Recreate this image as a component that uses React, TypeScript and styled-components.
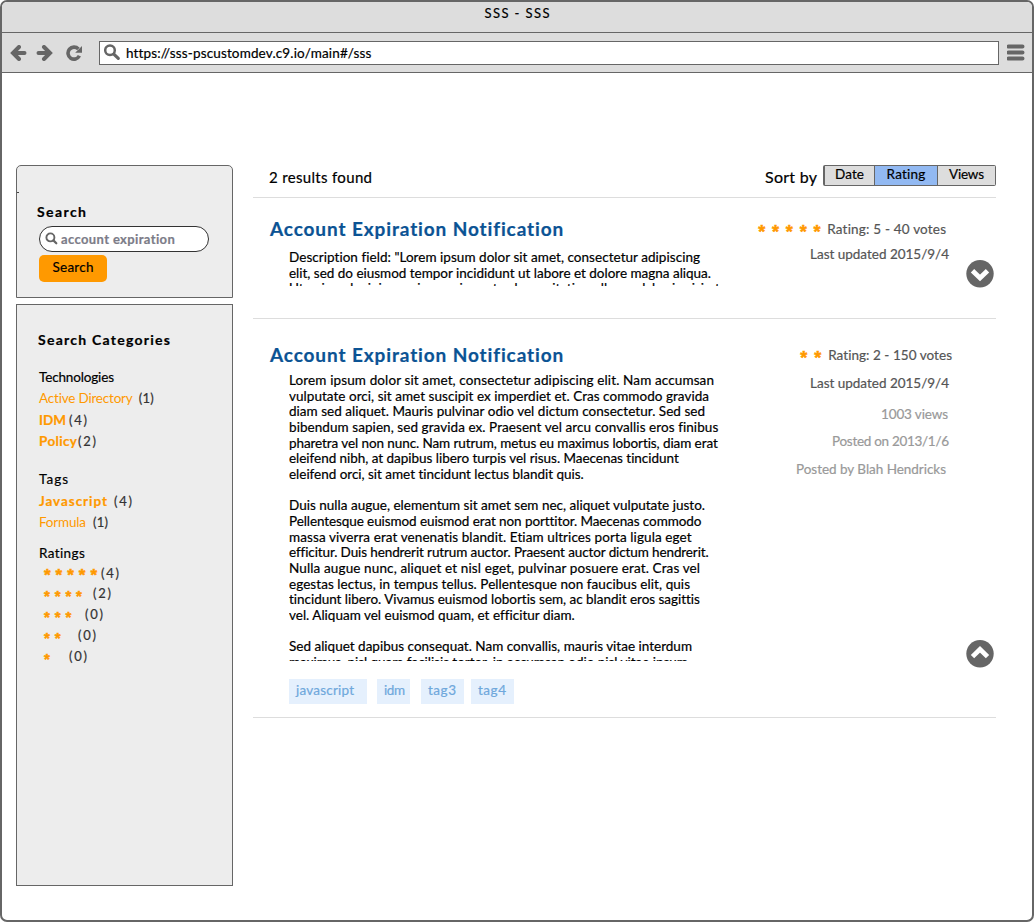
import React, { useLayoutEffect, useRef, useState } from "react";
import styled, { createGlobalStyle } from "styled-components";

const GlobalStyle = createGlobalStyle`
  * { box-sizing: border-box; }
  body {
    margin: 0;
    background: #fff;
    color: #000;
    font-family: Lato, "Liberation Sans", sans-serif;
    font-size: 13.5px;
    overflow: hidden;
  }
`;

/* ---------- text set to a fixed measure ---------- */

const Measured = styled.span<{ $size?: number; $color?: string; $bold?: boolean; $weight?: number }>`
  display: inline-block;
  flex: none;
  white-space: pre;
  font-size: ${(p) => p.$size ?? 13.5}px;
  font-weight: ${(p) => (p.$bold ? 700 : 400)};
  color: ${(p) => p.$color ?? "#000"};
  -webkit-text-stroke: ${(p) => p.$weight ?? 0.2}px currentColor;
`;

type LabelProps = {
  children: string;
  width: number;
  size?: number;
  color?: string;
  bold?: boolean;
  stroke?: number;
};

function Label({ children, width, size, color, bold, stroke }: LabelProps) {
  const ref = useRef<HTMLSpanElement>(null);
  const [tracking, setTracking] = useState(0);
  useLayoutEffect(() => {
    const el = ref.current;
    if (!el) return;
    el.style.letterSpacing = "0px";
    const natural = el.getBoundingClientRect().width;
    const next = (width - natural) / Math.max(1, children.length - 1);
    el.style.letterSpacing = `${next}px`;
    setTracking(next);
  }, [children, width, size, bold]);
  return (
    <Measured
      ref={ref}
      $size={size}
      $color={color}
      $bold={bold}
      $weight={stroke}
      style={{ letterSpacing: tracking, marginRight: -tracking }}
    >
      {children}
    </Measured>
  );
}

/* ---------- browser window ---------- */

const Window = styled.div`
  width: 1034px;
  height: 922px;
  border: 2px solid #666;
  border-radius: 7px;
  overflow: hidden;
  background: #fff;
`;

const TitleBar = styled.header`
  height: 31px;
  padding-top: 3px;
  border-bottom: 1px solid #666;
  background: #ddd;
  display: flex;
  justify-content: center;
  line-height: 17px;
`;

const Toolbar = styled.nav`
  height: 40px;
  border-bottom: 1px solid #666;
  background: #ddd;
  display: flex;
  align-items: center;
  padding: 0 6px 0 8px;
`;

const NavIcon = styled.svg<{ $after: number }>`
  display: block;
  flex: none;
  margin-right: ${(p) => p.$after}px;
`;

const AddressBar = styled.div`
  width: 900px;
  height: 24px;
  border: 1px solid #666;
  background: #fff;
  display: flex;
  align-items: center;
  padding-left: 4px;
  gap: 5px;
  margin-right: 8px;
`;

const Content = styled.main`
  display: flex;
  gap: 20px;
  padding: 92px 0 0 14px;
`;

/* ---------- sidebar ---------- */

const Sidebar = styled.aside`
  width: 217px;
  display: flex;
  flex-direction: column;
  gap: 6px;
`;

const Panel = styled.section<{ $height: number; $rounded?: boolean }>`
  position: relative;
  height: ${(p) => p.$height}px;
  border: 1px solid #666;
  border-radius: ${(p) => (p.$rounded ? "5px 5px 0 0" : "0")};
  background: #ededed;
  padding-left: 22px;
`;

const Tick = styled.i`
  position: absolute;
  left: 0;
  top: 26px;
  width: 2px;
  height: 1px;
  background: #444;
`;

const Heading = styled.h2<{ $top: number; $shift?: number }>`
  margin: ${(p) => p.$top}px 0 0 ${(p) => p.$shift ?? 0}px;
  height: 20px;
  line-height: 20px;
  font-size: 15px;
`;

const SearchField = styled.div`
  width: 170px;
  height: 26px;
  margin-top: 5px;
  border: 1px solid #333;
  border-radius: 13px;
  background: #fff;
  display: flex;
  align-items: center;
  padding: 0 0 1px 5px;
  gap: 3px;
`;

const SearchButton = styled.button`
  display: flex;
  justify-content: center;
  align-items: center;
  width: 68px;
  height: 27px;
  margin-top: 3px;
  padding: 0 0 3px;
  border: 0;
  border-radius: 5px;
  background: #ff9900;
  font-family: inherit;
`;

const Row = styled.div<{ $top: number; $gap?: number }>`
  display: flex;
  align-items: center;
  gap: ${(p) => p.$gap ?? 0}px;
  height: 18px;
  margin-top: ${(p) => p.$top}px;
`;

const StarRow = styled.span<{ $pitch: number; $width?: number; $size?: number; $indent?: number }>`
  display: inline-grid;
  flex: none;
  grid-auto-flow: column;
  grid-auto-columns: ${(p) => p.$pitch}px;
  width: ${(p) => (p.$width ? `${p.$width}px` : "auto")};
  color: #ff9900;
  font: 700 ${(p) => p.$size ?? 18}px "Liberation Sans", sans-serif;
  -webkit-text-stroke: 0.5px currentColor;
  height: 18px;
  line-height: 18px;
  padding-top: 3px;
  padding-left: ${(p) => p.$indent ?? 0}px;
`;

/* ---------- results ---------- */

const Results = styled.section`
  width: 743px;
`;

const ResultsHeader = styled.div`
  display: flex;
  height: 33px;
  padding-left: 16px;
  border-bottom: 1px solid #ddd;
`;

const HeaderText = styled.div`
  padding-top: 3px;
  line-height: 18px;
`;

const Sort = styled.div`
  display: flex;
  gap: 6px;
  margin-left: auto;
`;

const Segments = styled.div`
  display: flex;
  height: 21px;
  border: 1px solid #666;
  border-left-width: 2px;
  border-radius: 2px;
`;

const Segment = styled.div<{ $width: number; $active?: boolean }>`
  width: ${(p) => p.$width}px;
  background: ${(p) => (p.$active ? "#92b9f2" : "#ddd")};
  display: flex;
  justify-content: center;
  line-height: 17px;
  & + & { border-left: 1px solid #666; }
`;

const Result = styled.article<{ $height: number }>`
  display: flex;
  height: ${(p) => p.$height}px;
  border-bottom: 1px solid #ddd;
  padding-left: 17px;
`;

const Copy = styled.div`
  width: 460px;
`;

const ResultTitle = styled.h1<{ $top: number }>`
  display: flex;
  align-items: center;
  margin: ${(p) => p.$top}px 0 0;
  height: 24px;
  line-height: 24px;
`;

const Body = styled.div<{ $height: number; $top: number }>`
  margin: ${(p) => p.$top}px 0 0 19px;
  height: ${(p) => p.$height}px;
  overflow: hidden;
`;

const Line = styled.div`
  height: 15.66px;
  line-height: 15.66px;
`;

const Tags = styled.div`
  display: flex;
  margin: 18px 0 0 19px;
`;

const Tag = styled.span<{ $width: number; $after: number }>`
  width: ${(p) => p.$width}px;
  height: 25px;
  margin-right: ${(p) => p.$after}px;
  padding-left: 7px;
  background: #e5f0fd;
  line-height: 23px;
`;

const Meta = styled.div`
  width: 222px;
  display: flex;
  flex-direction: column;
`;

const MetaRow = styled.div<{ $top: number; $inset: number }>`
  display: flex;
  justify-content: flex-end;
  align-items: center;
  height: 18px;
  margin-top: ${(p) => p.$top}px;
  padding-right: ${(p) => p.$inset}px;
`;

const Toggle = styled.button<{ $top: number }>`
  width: 28px;
  height: 28px;
  margin: ${(p) => p.$top}px 0 0 14px;
  padding: 0;
  border: 0;
  background: none;
  svg { display: block; }
`;

type StarsProps = { count: number; pitch: number; width?: number; size?: number; indent?: number };

function Stars({ count, pitch, width, size, indent }: StarsProps) {
  return (
    <StarRow $pitch={pitch} $width={width} $size={size} $indent={indent}>
      {Array.from({ length: count }, (_, i) => (
        <span key={i}>*</span>
      ))}
    </StarRow>
  );
}

function Chevron({ up }: { up?: boolean }) {
  return (
    <svg width="28" height="28" viewBox="0 0 28 28">
      <circle cx="14" cy="13.7" r="13.7" fill="#666" />
      <path
        d={up ? "M6.5 16.6 14 9.3l7.5 7.3" : "M6.5 10.7 14 18l7.5-7.3"}
        fill="none"
        stroke="#fff"
        strokeWidth="4.8"
      />
    </svg>
  );
}

type TextLine = [string, number];

const summary: TextLine[] = [
  ['Description field: "Lorem ipsum dolor sit amet, consectetur adipiscing', 411],
  ["elit, sed do eiusmod tempor incididunt ut labore et dolore magna aliqua.", 422],
  ["Ut enim ad minim veniam, quis nostrud exercitation ullamco laboris nisi ut", 431],
];

const fullText: TextLine[] = [
  ["Lorem ipsum dolor sit amet, consectetur adipiscing elit. Nam accumsan", 425],
  ["vulputate orci, sit amet suscipit ex imperdiet et. Cras commodo gravida", 420],
  ["diam sed aliquet. Mauris pulvinar odio vel dictum consectetur. Sed sed", 416],
  ["bibendum sapien, sed gravida ex. Praesent vel arcu convallis eros finibus", 429],
  ["pharetra vel non nunc. Nam rutrum, metus eu maximus lobortis, diam erat", 429],
  ["eleifend nibh, at dapibus libero turpis vel risus. Maecenas tincidunt", 390],
  ["eleifend orci, sit amet tincidunt lectus blandit quis.", 295],
  ["", 0],
  ["Duis nulla augue, elementum sit amet sem nec, aliquet vulputate justo.", 416],
  ["Pellentesque euismod euismod erat non porttitor. Maecenas commodo", 412],
  ["massa viverra erat venenatis blandit. Etiam ultrices porta ligula eget", 403],
  ["efficitur. Duis hendrerit rutrum auctor. Praesent auctor dictum hendrerit.", 419],
  ["Nulla augue nunc, aliquet et nisl eget, pulvinar posuere erat. Cras vel", 411],
  ["egestas lectus, in tempus tellus. Pellentesque non faucibus elit, quis", 401],
  ["tincidunt libero. Vivamus euismod lobortis sem, ac blandit eros sagittis", 411],
  ["vel. Aliquam vel euismod quam, et efficitur diam.", 285],
  ["", 0],
  ["Sed aliquet dapibus consequat. Nam convallis, mauris vitae interdum", 403],
  ["maximus, nisl quam facilisis tortor, in accumsan odio nisl vitae ipsum.", 402],
];

function Paragraphs({ lines }: { lines: TextLine[] }) {
  return (
    <>
      {lines.map(([text, width], i) => (
        <Line key={i}>{text && <Label width={width}>{text}</Label>}</Line>
      ))}
    </>
  );
}

const GREY = "#555";
const LIGHT = "#999";
const COUNT = "#333";
const ORANGE = "#ff9900";

export default function App() {
  return (
    <>
      <GlobalStyle />
      <Window>
        <TitleBar>
          <Label width={65} size={13}>SSS - SSS</Label>
        </TitleBar>
        <Toolbar>
          <NavIcon $after={9} width="17" height="16" viewBox="0 0 17 16">
            <path d="M9 2 3 8l6 6M3.5 8H14.5" fill="none" stroke="#666" strokeWidth="4" strokeLinecap="round" />
          </NavIcon>
          <NavIcon $after={12} width="17" height="16" viewBox="0 0 17 16">
            <path d="M8 2l6 6-6 6M13.5 8H2.5" fill="none" stroke="#666" strokeWidth="4" strokeLinecap="round" />
          </NavIcon>
          <NavIcon $after={17} width="17" height="16" viewBox="0 0 17 16">
            <path d="M13.4 4A6 6 0 1 0 14.4 10.8" fill="none" stroke="#666" strokeWidth="3.6" />
            <path d="M17 1V7.8H10.2Z" fill="#666" />
          </NavIcon>
          <AddressBar>
            <svg width="17" height="17" viewBox="0 0 17 17">
              <circle cx="6" cy="6.3" r="4.8" fill="none" stroke="#666" strokeWidth="2.5" />
              <path d="M9.8 10.1 14.3 14.4" stroke="#666" strokeWidth="3.2" strokeLinecap="round" />
            </svg>
            <Label width={245}>https://sss-pscustomdev.c9.io/main#/sss</Label>
          </AddressBar>
          <svg width="18" height="17" viewBox="0 0 18 17">
            <path d="M1.5 2.5H15.5M1.5 8.5H15.5M1.5 14.5H15.5" stroke="#666" strokeWidth="4" strokeLinecap="round" />
          </svg>
        </Toolbar>

        <Content>
          <Sidebar>
            <Panel $height={133} $rounded>
              <Tick />
              <Heading $top={35} $shift={-2}>
                <Label width={49} size={14} bold>Search</Label>
              </Heading>
              <SearchField>
                <svg width="13" height="13" viewBox="0 0 13 13">
                  <circle cx="5.4" cy="5.4" r="4" fill="none" stroke="#666" strokeWidth="1.9" />
                  <path d="M8.4 8.4 11.3 11.3" stroke="#666" strokeWidth="2.2" strokeLinecap="round" />
                </svg>
                <Label width={114} size={13} bold color="#7c7c88">account expiration</Label>
              </SearchField>
              <SearchButton>
                <Label width={41}>Search</Label>
              </SearchButton>
            </Panel>

            <Panel $height={582}>
              <Heading $top={24} $shift={-1}>
                <Label width={132} size={14} bold>Search Categories</Label>
              </Heading>
              <Row $top={19}><Label width={75}>Technologies</Label></Row>
              <Row $top={3} $gap={6}>
                <Label width={94} color={ORANGE} stroke={0}>Active Directory</Label>
                <Label width={15} size={13} color={COUNT}>(1)</Label>
              </Row>
              <Row $top={4} $gap={3}>
                <Label width={27} color={ORANGE} bold>IDM</Label>
                <Label width={18} size={13} color={COUNT}>(4)</Label>
              </Row>
              <Row $top={3} $gap={1}>
                <Label width={38} color={ORANGE} bold>Policy</Label>
                <Label width={18} size={13} color={COUNT}>(2)</Label>
              </Row>
              <Row $top={20}><Label width={29}>Tags</Label></Row>
              <Row $top={4} $gap={7}>
                <Label width={68} color={ORANGE} bold>Javascript</Label>
                <Label width={18} size={13} color={COUNT}>(4)</Label>
              </Row>
              <Row $top={3} $gap={7}>
                <Label width={47} color={ORANGE} stroke={0}>Formula</Label>
                <Label width={15} size={13} color={COUNT}>(1)</Label>
              </Row>
              <Row $top={13}><Label width={46}>Ratings</Label></Row>
              <Row $top={2}><Stars count={5} pitch={11.6} width={62} size={17} indent={5} /><Label width={18} size={13} color={COUNT}>(4)</Label></Row>
              <Row $top={2}><Stars count={4} pitch={10.7} width={54} size={15} indent={5} /><Label width={18} size={13} color={COUNT}>(2)</Label></Row>
              <Row $top={3}><Stars count={3} pitch={10.7} width={46} size={15} indent={5} /><Label width={18} size={13} color={COUNT}>(0)</Label></Row>
              <Row $top={3}><Stars count={2} pitch={10.7} width={39} size={15} indent={5} /><Label width={18} size={13} color={COUNT}>(0)</Label></Row>
              <Row $top={3}><Stars count={1} pitch={10.7} width={30} size={15} indent={5} /><Label width={18} size={13} color={COUNT}>(0)</Label></Row>
            </Panel>
          </Sidebar>

          <Results>
            <ResultsHeader>
              <HeaderText><Label width={103} size={15}>2 results found</Label></HeaderText>
              <Sort>
                <HeaderText><Label width={52} size={16}>Sort by</Label></HeaderText>
                <Segments>
                  <Segment $width={49}><Label width={29}>Date</Label></Segment>
                  <Segment $width={63} $active><Label width={39}>Rating</Label></Segment>
                  <Segment $width={58}><Label width={35}>Views</Label></Segment>
                </Segments>
              </Sort>
            </ResultsHeader>

            <Result $height={121}>
              <Copy>
                <ResultTitle $top={19}>
                  <Label width={294} size={19} bold color="#0b5394">Account Expiration Notification</Label>
                </ResultTitle>
                <Body $height={36} $top={9}><Paragraphs lines={summary} /></Body>
              </Copy>
              <Meta>
                <MetaRow $top={22} $inset={6}>
                  <Stars count={5} pitch={13.8} />
                  <Label width={119} color={GREY}>Rating: 5 - 40 votes</Label>
                </MetaRow>
                <MetaRow $top={7} $inset={3}><Label width={139} color={GREY}>Last updated 2015/9/4</Label></MetaRow>
              </Meta>
              <Toggle $top={62}><Chevron /></Toggle>
            </Result>

            <Result $height={399}>
              <Copy>
                <ResultTitle $top={24}>
                  <Label width={294} size={19} bold color="#0b5394">Account Expiration Notification</Label>
                </ResultTitle>
                <Body $height={288} $top={6}><Paragraphs lines={fullText} /></Body>
                <Tags>
                  <Tag $width={78} $after={10}><Label width={58} color="#6fa8dc">javascript</Label></Tag>
                  <Tag $width={33} $after={11}><Label width={21} color="#6fa8dc">idm</Label></Tag>
                  <Tag $width={43} $after={7}><Label width={28} color="#6fa8dc">tag3</Label></Tag>
                  <Tag $width={43} $after={0}><Label width={28} color="#6fa8dc">tag4</Label></Tag>
                </Tags>
              </Copy>
              <Meta>
                <MetaRow $top={27} $inset={0}>
                  <Stars count={2} pitch={14} />
                  <Label width={124} color={GREY}>Rating: 2 - 150 votes</Label>
                </MetaRow>
                <MetaRow $top={10} $inset={3}><Label width={139} color={GREY}>Last updated 2015/9/4</Label></MetaRow>
                <MetaRow $top={13} $inset={4}><Label width={67} color={LIGHT}>1003 views</Label></MetaRow>
                <MetaRow $top={9} $inset={3}><Label width={117} color={LIGHT}>Posted on 2013/1/6</Label></MetaRow>
                <MetaRow $top={10} $inset={6}><Label width={150} color={LIGHT}>Posted by Blah Hendricks</Label></MetaRow>
              </Meta>
              <Toggle $top={321}><Chevron up /></Toggle>
            </Result>
          </Results>
        </Content>
      </Window>
    </>
  );
}
